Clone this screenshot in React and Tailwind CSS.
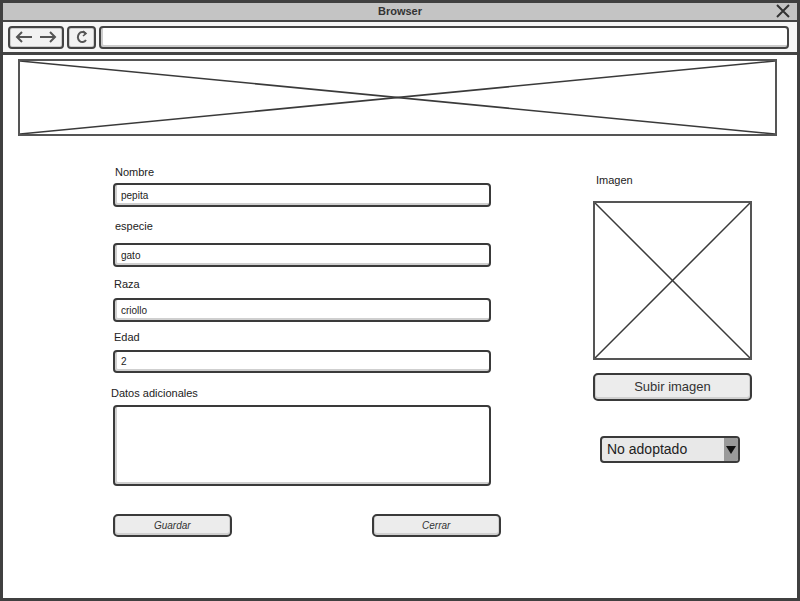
import React from "react";

const font = { fontFamily: '"Liberation Sans", Arial, sans-serif' };

function XBox({ className }) {
  return (
    <div className={"relative border-2 border-[#555555] bg-white " + className}>
      <svg className="absolute inset-0 w-full h-full" preserveAspectRatio="none" viewBox="0 0 100 100">
        <line x1="0" y1="0" x2="100" y2="100" stroke="#3a3a3a" strokeWidth="1.5" vectorEffect="non-scaling-stroke" />
        <line x1="0" y1="100" x2="100" y2="0" stroke="#3a3a3a" strokeWidth="1.5" vectorEffect="non-scaling-stroke" />
      </svg>
    </div>
  );
}

function Input({ value, className = "h-[24px]" }) {
  return (
    <div className={"w-[378px] rounded-[4px] border-2 border-[#3a3a3a] bg-white shadow-[inset_1px_-1px_0_1px_#cfcfcf] flex items-center pl-[6px] text-[10px] text-[#222] " + className}>
      {value}
    </div>
  );
}

function Label({ children, className = "" }) {
  return <div className={"h-[14px] leading-[14px] text-[11px] text-[#222] " + className}>{children}</div>;
}

function Btn({ children, className }) {
  return (
    <div className={"rounded-[5px] border-2 border-[#3a3a3a] bg-[#ececec] shadow-[inset_0_-1px_0_1px_#d0d0d0] flex items-center justify-center text-[#333] " + className}>
      {children}
    </div>
  );
}

export default function App() {
  return (
    <div style={font} className="w-[800px] h-[601px] border-[3px] border-[#404040] bg-white flex flex-col overflow-hidden">
      {/* title bar */}
      <div className="h-[19px] bg-[#c4c4c4] border-b-2 border-[#444] flex items-center relative shrink-0">
        <div className="flex-1 text-center text-[11px] font-semibold text-[#333] leading-none">Browser</div>
        <svg className="absolute right-[7px] top-[1px]" width="14" height="14" viewBox="0 0 14 14">
          <path d="M1 1 L13 13 M13 1 L1 13" stroke="#333" strokeWidth="2" />
        </svg>
      </div>
      {/* toolbar */}
      <div className="h-[33px] bg-[#f6f6f6] border-b-[3px] border-[#444] flex items-center px-[5px] gap-[3px] shrink-0">
        <div className="w-[56px] h-[23px] rounded-[4px] border-2 border-[#444] bg-[#f2f2f2] shadow-[inset_0_0_0_1px_#cccccc] flex items-center justify-center gap-[6px]">
          <svg width="18" height="12" viewBox="0 0 18 12"><path d="M17 6 H2 M7 1 L2 6 L7 11" stroke="#555" strokeWidth="2" fill="none" /></svg>
          <svg width="18" height="12" viewBox="0 0 18 12"><path d="M1 6 H16 M11 1 L16 6 L11 11" stroke="#555" strokeWidth="2" fill="none" /></svg>
        </div>
        <div className="w-[29px] h-[23px] rounded-[4px] border-2 border-[#444] bg-[#f2f2f2] shadow-[inset_0_0_0_1px_#cccccc] flex items-center justify-center">
          <svg width="12" height="14" viewBox="0 0 12 14"><path d="M9.5 3.5 A4.5 5 0 1 0 10 10" stroke="#555" strokeWidth="2" fill="none" /><path d="M7 1 L10 3.5 L7 6" stroke="#555" strokeWidth="1.6" fill="none" /></svg>
        </div>
        <div className="flex-1 mr-[3px] h-[23px] rounded-[4px] border-2 border-[#444] bg-white shadow-[inset_1px_-1px_0_1px_#cccccc]" />
      </div>
      {/* content */}
      <div className="flex-1 flex flex-col pt-[4px]">
        <XBox className="ml-[15px] mr-[20px] h-[77px]" />
        <div className="flex">
          <div className="ml-[108px] w-[390px] flex flex-col">
            <Label className="mt-[29px] ml-[4px]">Nombre</Label>
            <div className="mt-[4px] ml-[2px]"><Input value="pepita" /></div>
            <Label className="mt-[12px] ml-[4px]">especie</Label>
            <div className="mt-[10px] ml-[2px]"><Input value="gato" /></div>
            <Label className="mt-[10px] ml-[3px]">Raza</Label>
            <div className="mt-[7px] ml-[2px]"><Input value="criollo" /></div>
            <Label className="mt-[8px] ml-[3px]">Edad</Label>
            <div className="mt-[6px] ml-[2px]"><Input value="2" className="h-[23px]" /></div>
            <Label className="mt-[13px]">Datos adicionales</Label>
            <div className="mt-[5px] ml-[2px]"><Input value="" className="h-[81px]" /></div>
            <div className="mt-[28px] ml-[2px] flex">
              <Btn className="w-[119px] h-[23px] text-[10px] italic">Guardar</Btn>
              <Btn className="ml-[140px] w-[130px] h-[23px] text-[10px] italic">Cerrar</Btn>
            </div>
          </div>
          <div className="ml-[92px] w-[159px] flex flex-col">
            <Label className="mt-[37px] ml-[3px]">Imagen</Label>
            <XBox className="mt-[14px] w-[159px] h-[159px]" />
            <Btn className="mt-[13px] w-[159px] h-[28px] text-[13px]">Subir imagen</Btn>
            <div className="mt-[35px] ml-[7px] w-[140px] h-[27px] rounded-[4px] border-2 border-[#3a3a3a] bg-[#e8e8e8] flex overflow-hidden">
              <div className="flex-1 flex items-center pl-[5px] text-[14px] text-[#222]">No adoptado</div>
              <div className="w-[14px] bg-[#9a9a9a] flex items-center justify-center">
                <svg width="10" height="8" viewBox="0 0 10 8"><path d="M0 0 H10 L5 8 Z" fill="#111" /></svg>
              </div>
            </div>
          </div>
        </div>
      </div>
    </div>
  );
}
